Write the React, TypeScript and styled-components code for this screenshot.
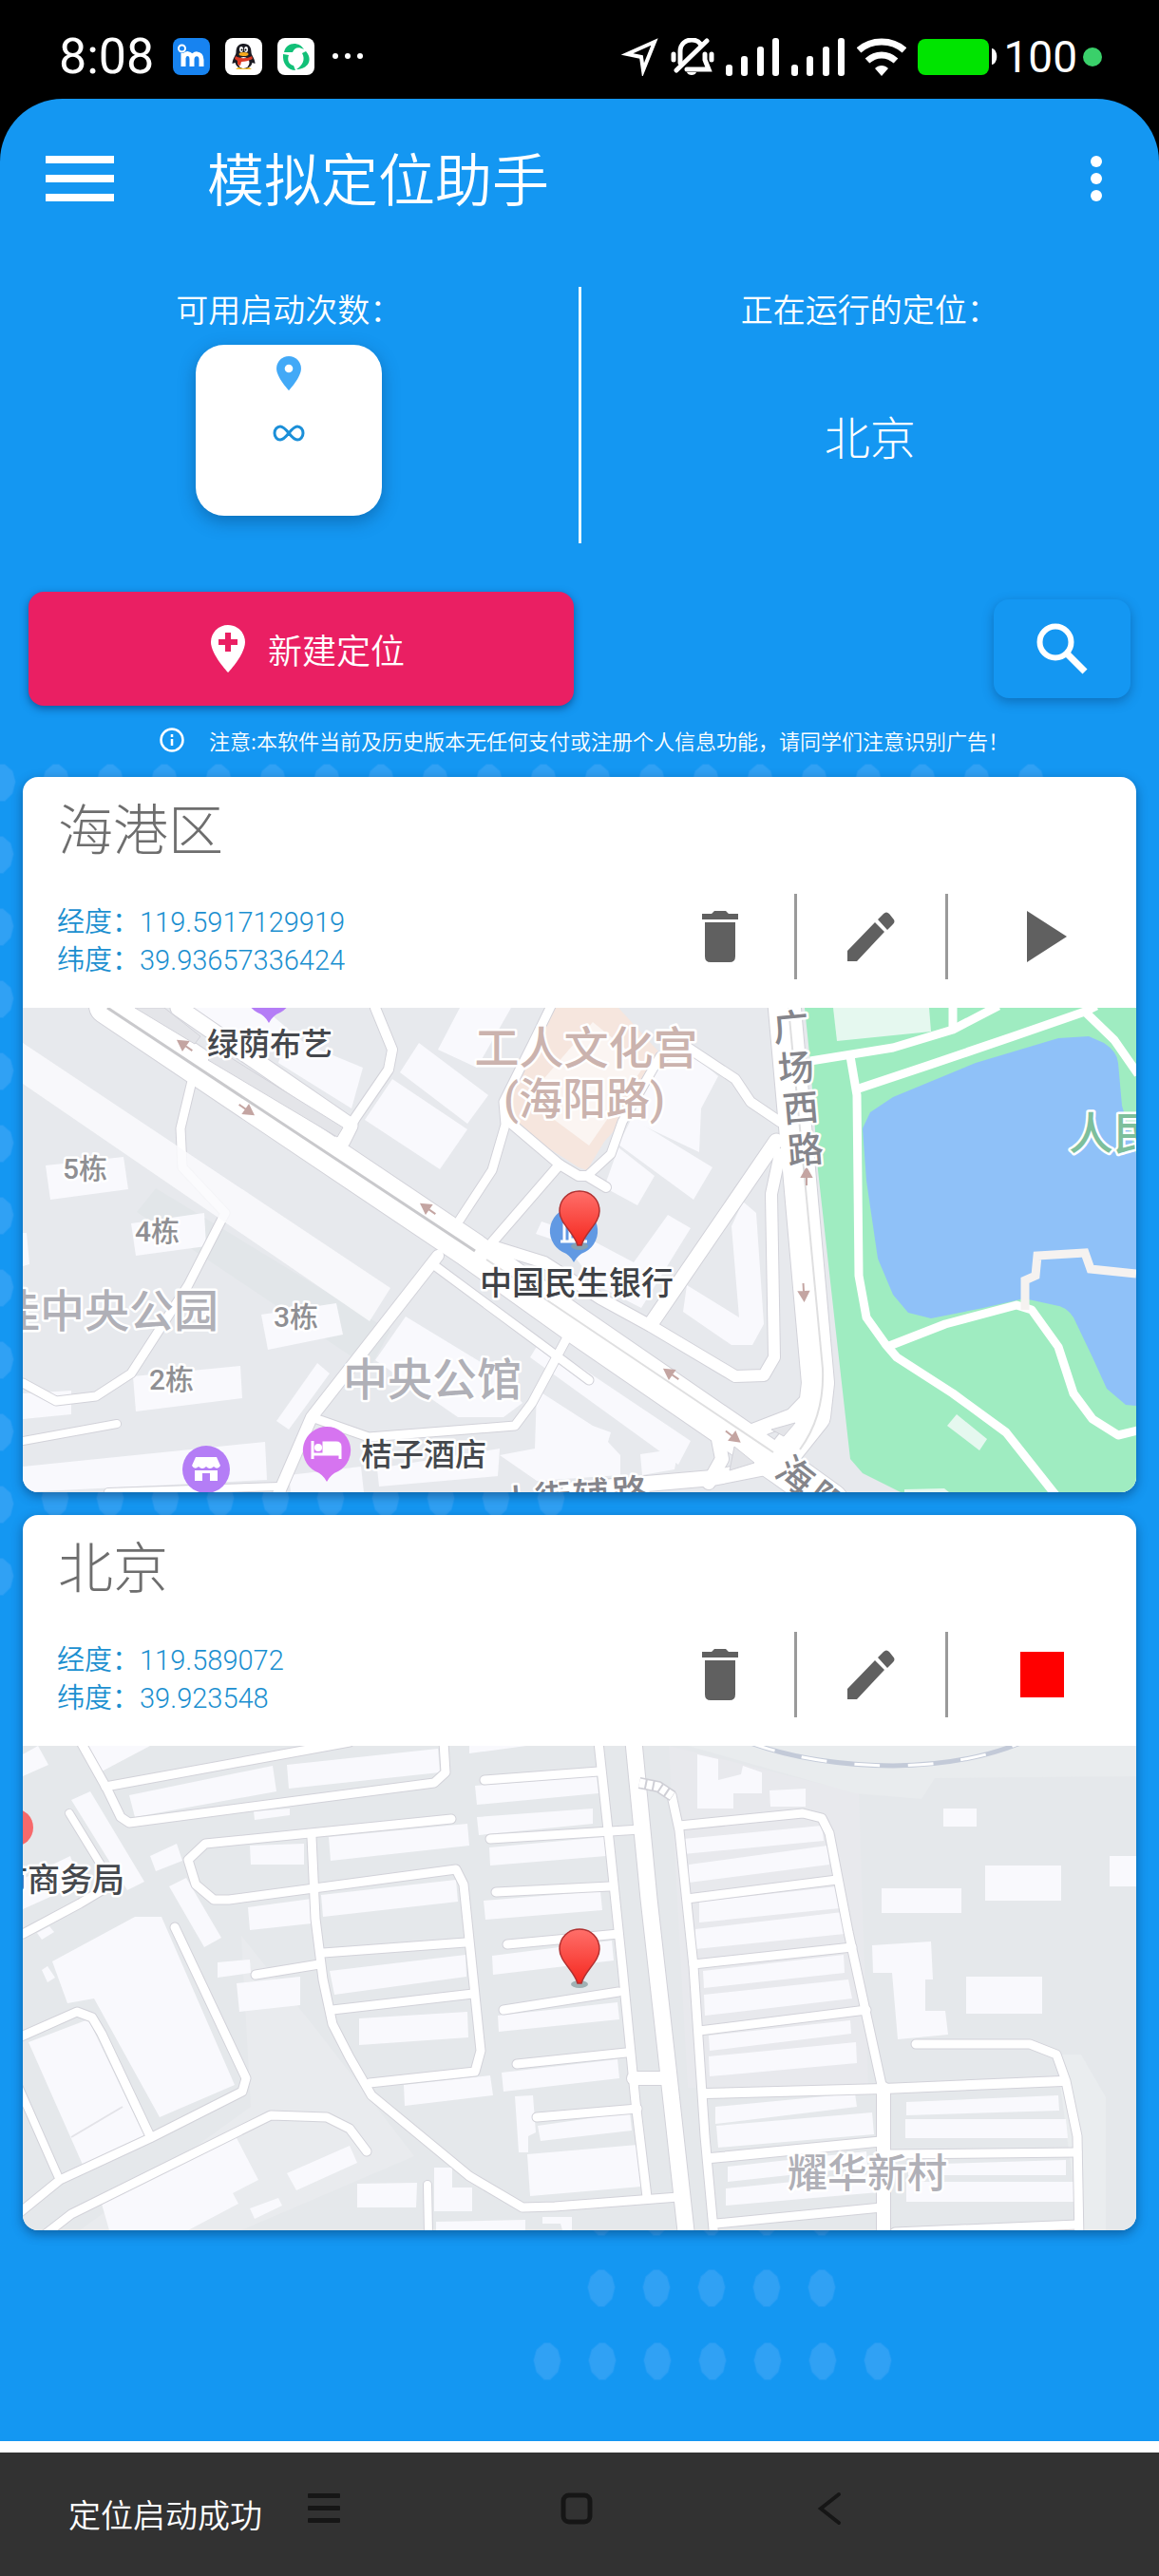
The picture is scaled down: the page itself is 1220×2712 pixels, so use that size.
import React from "react";
import styled, { createGlobalStyle } from "styled-components";

const cjk = `"Noto Sans CJK SC", "Noto Sans", sans-serif`;
const latin = `Roboto, "Noto Sans CJK SC", sans-serif`;
const blue = "#1497f2";

const GlobalStyle = createGlobalStyle`
  * { box-sizing: border-box; }
  body { margin: 0; background: #000; font-family: ${cjk}; }
  button { border: 0; padding: 0; background: none; color: inherit; font: inherit; cursor: pointer; }
  h1, h2, p, dl, dd, dt { margin: 0; font-weight: inherit; }
  svg { display: block; flex: none; }
`;

const Screen = styled.div`
  min-height: 100vh;
  display: flex;
  flex-direction: column;
  background: #000;
  overflow: hidden;
`;

/* ---------- status bar ---------- */
const StatusBar = styled.header`
  height: 104px;
  padding: 16px 60px 0 62px;
  display: flex;
  align-items: center;
  justify-content: space-between;
  color: #fff;
`;
const StatusGroup = styled.div<{ $gap: number }>`
  display: flex;
  align-items: center;
  gap: ${(p) => p.$gap}px;
`;
const Clock = styled.time`
  font: 400 52px/60px ${latin};
`;
const BatteryLevel = styled.span`
  font: 400 46px/60px ${latin};
`;
const LiveDot = styled.span`
  width: 20px;
  height: 20px;
  border-radius: 50%;
  background: #3ad06a;
`;

/* ---------- app panel ---------- */
const Panel = styled.main`
  position: relative;
  flex: 1;
  background: ${blue};
  border-radius: 66px 66px 0 0;
  overflow: hidden;
  color: #fff;
`;
const Backdrop = styled.svg`
  position: absolute;
  left: 0;
  top: 0;
`;
const Content = styled.div`
  position: relative;
  display: flex;
  flex-direction: column;
`;
const Toolbar = styled.div`
  height: 168px;
  padding: 0 48px;
  display: flex;
  align-items: center;
`;
const Title = styled.h1`
  flex: 1;
  margin-left: 98px;
  padding-bottom: 4px;
  font-size: 60px;
  font-weight: 350;
  line-height: 72px;
`;
const MenuButton = styled.button`
  width: 72px;
  height: 48px;
`;
const MoreButton = styled.button`
  width: 36px;
  height: 48px;
  display: flex;
  justify-content: center;
`;

const Stats = styled.section`
  margin-top: 30px;
  height: 270px;
  display: grid;
  grid-template-columns: 1fr 3px 1fr;
`;
const StatsDivider = styled.div`
  background: #e8f8ff;
`;
const Stat = styled.div`
  padding-top: 3px;
  display: flex;
  flex-direction: column;
  align-items: center;
  gap: 18px;
`;
const StatLabel = styled.p`
  font-size: 34px;
  font-weight: 350;
  line-height: 40px;
`;
const CountCard = styled.div`
  width: 196px;
  height: 180px;
  padding-top: 12px;
  border-radius: 30px;
  background: #fff;
  color: #1b8fd8;
  box-shadow: 0 6px 18px rgba(0, 40, 80, 0.35);
  display: flex;
  flex-direction: column;
  align-items: center;
  gap: 36px;
`;
const Running = styled.p`
  padding-top: 59px;
  font-size: 48px;
  font-weight: 300;
  line-height: 72px;
`;

const Actions = styled.section`
  margin-top: 51px;
  padding: 0 30px;
  display: flex;
  align-items: center;
  justify-content: space-between;
`;
const CreateButton = styled.button`
  flex: 0 0 calc(50% - 6px);
  height: 120px;
  padding-left: 14px;
  border-radius: 16px;
  background: #ea1f63;
  box-shadow: 0 3px 8px rgba(0, 30, 80, 0.5);
  display: flex;
  align-items: center;
  justify-content: center;
  gap: 24px;
  color: #fff;
  font-size: 36px;
  font-weight: 350;
`;
const SearchButton = styled.button`
  width: 144px;
  height: 104px;
  border-radius: 16px;
  background: ${blue};
  box-shadow: 0 4px 12px rgba(0, 40, 90, 0.35);
  display: flex;
  align-items: center;
  justify-content: center;
`;
const Notice = styled.p`
  height: 75px;
  padding: 0 0 4px 10px;
  display: flex;
  align-items: center;
  justify-content: center;
  gap: 26px;
  font-size: 22px;
  font-weight: 350;
`;

/* ---------- location cards ---------- */
const CardList = styled.section`
  padding: 0 24px;
  display: flex;
  flex-direction: column;
  gap: 24px;
`;
const Card = styled.article`
  border-radius: 16px;
  background: #fff;
  overflow: hidden;
  box-shadow: 0 4px 12px rgba(0, 30, 70, 0.45);
`;
const CardTitle = styled.h2`
  padding: 16px 37px 4px;
  color: #6e6e6e;
  font-size: 58px;
  font-weight: 300;
  line-height: 72px;
`;
const CardRow = styled.div`
  margin: 31px 0 30px;
  height: 90px;
  padding-left: 36px;
  display: flex;
  align-items: stretch;
`;
const Coordinates = styled.dl`
  flex: 1;
  align-self: center;
  padding-top: 10px;
  color: #1b8fd0;
  font: 350 29px/40px ${latin};
`;
const Coordinate = styled.div`
  display: flex;
`;
const CardAction = styled.button<{ $wide?: boolean }>`
  width: ${(p) => (p.$wide ? 198 : 156)}px;
  display: flex;
  align-items: center;
  justify-content: center;
`;
const ActionDivider = styled.div`
  width: 3px;
  background: #9a9a9a;
`;
const Map = styled.svg`
  width: 100%;
  height: 510px;
  font-family: ${latin};
`;

/* ---------- bottom ---------- */
const Strip = styled.div`
  height: 12px;
  background: #fff;
`;
const BottomBar = styled.footer`
  position: relative;
  height: 130px;
  background: #323232;
`;
const NavKeys = styled.nav`
  height: 118px;
  padding-right: 6px;
  display: flex;
  justify-content: center;
`;
const NavKey = styled.button`
  width: 266px;
  display: flex;
  align-items: center;
  justify-content: center;
`;
const Toast = styled.p`
  position: absolute;
  left: 72px;
  top: 41px;
  color: #fff;
  font-size: 34px;
  font-weight: 350;
  line-height: 48px;
`;

/* ---------- small icons ---------- */
const Signal = () => (
  <svg width="57" height="40" fill="#fff">
    <rect x="0" y="28" width="7" height="12" rx="3" />
    <rect x="16" y="19" width="7" height="21" rx="3" />
    <rect x="33" y="9" width="7" height="31" rx="3" />
    <rect x="49" y="0" width="7" height="40" rx="3" />
  </svg>
);

const NotificationIcons = () => (
  <svg width="202" height="40" viewBox="0 0 202 40">
    <rect width="39" height="39" rx="8" fill="#1783f0" />
    <circle cx="9.500" cy="11" r="3.500" fill="none" stroke="#fff" strokeWidth="2" />
    <path d="M11 30V16M11 21c1-6 9-6 9 1v8M20 22c1-7 10-7 10 1v7" fill="none" stroke="#fff" strokeWidth="5" />
    <rect x="55" width="39" height="39" rx="8" fill="#fff" />
    <path d="M66 33l4-3h9l4 3z" fill="#f6c02c" />
    <path d="M74.500 6c-6 0-8 4-8 9 0 3-4 7-4 12l3-1c1 4 4 6 9 6s8-2 9-6l3 1c0-5-4-9-4-12 0-5-2-9-8-9z" fill="#1b1b22" />
    <ellipse cx="74.500" cy="26" rx="6" ry="6" fill="#fff" />
    <ellipse cx="72" cy="12" rx="2" ry="3" fill="#fff" />
    <ellipse cx="77" cy="12" rx="2" ry="3" fill="#fff" />
    <circle cx="72.500" cy="12.500" r="1" /><circle cx="76.500" cy="12.500" r="1" />
    <ellipse cx="74.500" cy="17" rx="5" ry="2" fill="#f6a91c" />
    <path d="M66 19c5 3 12 3 17 0l1 3c-4 2-8 3-12 3l-1 4-3-1v-4l-3-2z" fill="#dd3a24" />
    <rect x="110" width="39" height="39" rx="8" fill="#fff" />
    <g fill="#12c078">
      <path d="M117 15c2-11 16-12 21-3-6-3-10-2-12 3z" />
      <path d="M140 14c8 9 2 19-10 19 6-4 10-10 6-17z" />
      <path d="M116 17c-1 10 5 17 13 17l-2-5c-5-1-7-6-5-11z" />
    </g>
    <g fill="#fff"><circle cx="171" cy="19" r="3" /><circle cx="184" cy="19" r="3" /><circle cx="197" cy="19" r="3" /></g>
  </svg>
);

const LocationArrow = () => (
  <svg width="40" height="40" viewBox="0 0 40 40">
    <path d="M35 4L6 17l15 3 2 14z" fill="none" stroke="#fff" strokeWidth="4" strokeLinejoin="miter" />
  </svg>
);
const MutedBell = () => (
  <svg width="46" height="40" viewBox="0 0 46 40" fill="none" stroke="#fff" strokeLinecap="round">
    <path d="M10 26V14C10 6 16 2 22 2c4 0 7 1 9 4M36 17v6l4 10H17" strokeWidth="5" />
    <path d="M3 17v6M43 17v6" strokeWidth="5" />
    <path d="M6 34L38 3" strokeWidth="5" />
    <path d="M17 36h10c-1 4-9 4-10 0z" fill="#fff" stroke="none" />
  </svg>
);
const Wifi = () => (
  <svg width="52" height="40" viewBox="0 0 52 40">
    <g fill="none" stroke="#fff" strokeWidth="7">
      <path d="M2 13c13-12 35-12 48 0" /><path d="M11 24c9-8 21-8 30 0" />
    </g>
    <path d="M19 32c4-4 10-4 14 0l-7 8z" fill="#fff" />
  </svg>
);
const Battery = () => (
  <svg width="84" height="40">
    <rect y="1" width="75" height="38" rx="8" fill="#00e400" />
    <path d="M78 11c7 1 7 16 0 17z" fill="#fff" />
  </svg>
);

const PinGlyph = ({ size, color, children }: { size: [number, number]; color: string; children?: React.ReactNode }) => (
  <svg width={size[0]} height={size[1]} viewBox="0 0 36 50">
    <path d="M18 0C8 0 0 8 0 18c0 13 18 32 18 32s18-19 18-32C36 8 28 0 18 0z" fill={color} />
    {children}
  </svg>
);

const Trash = () => (
  <svg width="38" height="54" viewBox="0 0 38 54" fill="#606060">
    <path d="M0 3h10l3-3h12l3 3h10v6H0zM3 12h32v36q0 6-6 6H9q-6 0-6-6z" />
  </svg>
);
const Pencil = () => (
  <svg width="50" height="52" viewBox="0 0 50 52" fill="#606060">
    <path d="M0 41L29 11l10 10L10 52H0zM32 8l6-6q3-3 6 0l4 5q3 3 0 6l-6 6z" />
  </svg>
);
const Play = () => (
  <svg width="52" height="54" viewBox="0 0 52 54"><path d="M10 0l42 27-42 27z" fill="#606060" /></svg>
);
const Stop = () => (
  <svg width="46" height="48"><rect width="46" height="48" fill="#f00" /></svg>
);

/* ---------- background dots ---------- */
const dotPitch = 57;
const dots: [number, number][] = [];
for (let i = 0; i < 20; i++) dots.push([i * dotPitch + 2, 720]);
for (let i = 1; i < 12; i++) dots.push([0, 720 + i * 76]);
for (let i = 1; i < 11; i++) dots.push([i * 58, 1474]);
for (let i = 0; i < 5; i++) dots.push([633 + i * 58, 2230], [633 + i * 58, 2305]);
for (let i = 0; i < 7; i++) dots.push([576 + i * 58, 2382]);

const Dots = () => (
  <Backdrop width="1220" height="2466" fill="#30a1f4" aria-hidden="true">
    {dots.map(([x, y], i) => (
      <path key={i} d={`M${x - 3} ${y - 19}h6l8 7 3 11-3 12-8 8h-6l-8-8-3-12 3-11z`} stroke="#30a1f4" strokeOpacity=".4" strokeWidth="2" strokeLinejoin="round" />
    ))}
  </Backdrop>
);

/* ---------- maps ---------- */
type Road = [width: number, points: string];

const Roads = ({ items }: { items: Road[] }) => (
  <g fill="none" strokeLinejoin="round" strokeLinecap="round">
    {items.map(([w, p], i) => <polyline key={`c${i}`} points={p} stroke="#d2d2d9" strokeWidth={w + 2} />)}
    {items.map(([w, p], i) => <polyline key={`r${i}`} points={p} stroke="#fff" strokeWidth={w} />)}
  </g>
);

const Blocks = ({ items, fill = "#f9f9fd" }: { items: string[]; fill?: string }) => (
  <g fill={fill}>{items.map((p, i) => <polygon key={i} points={p} />)}</g>
);

type LabelProps = {
  x: number; y: number; size: number; color: string; children: string;
  anchor?: "start" | "middle" | "end"; turn?: number; weight?: number;
};
const Label = ({ x, y, size, color, children, anchor = "middle", turn = 0, weight = 500 }: LabelProps) => (
  <text x={x} y={y} fontSize={size} fill={color} textAnchor={anchor} fontWeight={weight}
    stroke="#fff" strokeWidth="5" strokeLinejoin="round" paintOrder="stroke"
    transform={turn ? `rotate(${turn} ${x} ${y})` : undefined}>{children}</text>
);

const MarkerPin = ({ id }: { id: string }) => (
  <g>
    <defs>
      <linearGradient id={id} x1="0" y1="0" x2="0" y2="1">
        <stop offset="0" stopColor="#ff6f6a" /><stop offset="1" stopColor="#f5281f" />
      </linearGradient>
    </defs>
    <ellipse cx="586" cy="251" rx="9" ry="4" fill="#8fa3a6" opacity=".8" />
    <path d="M586 193c-12 0-21 9-21 21 0 13 15 22 19 36h4c4-14 19-23 19-36 0-12-9-21-21-21z"
      fill={`url(#${id})`} stroke="#b03030" strokeWidth="1.500" />
  </g>
);

const Poi = ({ x, y, color, children }: { x: number; y: number; color: string; children?: React.ReactNode }) => (
  <g transform={`translate(${x} ${y})`}>
    <path d="M0-25a25 25 0 0 1 12 47Q4 25 0 33-4 25-12 22A25 25 0 0 1 0-25z" fill={color} />
    {children}
  </g>
);

const Arrow = ({ x, y, turn }: { x: number; y: number; turn: number }) => (
  <path d="M-9 0H4M0-5l9 5-9 5z" fill="#c4a5a2" stroke="#c4a5a2" strokeWidth="2" transform={`translate(${x} ${y}) rotate(${turn})`} />
);

const harborBlocks = [
  "417,37 490,92 468,122 397,68", "389,75 468,128 439,170 360,118", "460,0 514,0 478,63 437,44",
  "278,30 358,63 346,106 269,58", "166,0 253,0 300,40 240,50",
  "24,166 106,157 111,191 29,202", "114,227 191,216 193,251 119,261", "251,323 330,311 337,344 258,360",
  "116,388 229,377 231,411 119,425", "310,374 323,385 280,444 267,435", "0,406 51,403 51,428 0,433",
  "0,483 255,457 257,497 0,510", "403,325 490,378 526,416 506,431 458,431 371,371",
  "280,492 356,483 359,510 282,510", "373,485 502,464 500,493 375,504",
  "541,402 600,440 619,447 616,457 629,471 629,492 541,498 502,471 539,464",
  "545,350 703,456 690,481 534,368", "671,60 700,45 732,72 714,106 712,152 640,118",
  "641,116 726,168 706,202 627,144", "627,147 665,177 647,208 612,189",
  "679,218 703,232 651,316 604,292 570,248 540,238 546,225 590,240 643,268",
  "758,204 772,216 780,333 768,355 746,355 695,320 699,292 754,326 746,230",
  "650,470 690,464 686,486 652,492", "0,237 4,237 7,270 0,272",
];
const harborRoads: Road[] = [
  [9, "178,77 166,127 168,168 213,216 174,292 114,385 77,409 35,414 0,395"],
  [8, "0,456 99,438"],
  [8, "90,510 270,504"],
  [12, "437,261 304,431 269,512"],
  [9, "304,431 364,452 518,440 536,416 573,347"],
  [9, "433,271 541,351 596,392"],
  [10, "371,0 389,44 385,65 350,116 334,144"],
  [17, "164,0 344,124 336,140"],
  [9, "460,223 494,171 508,123 506,99 537,37 557,-4"],
  [10, "494,247 565,165 512,120"],
  [10, "565,165 585,177 594,177 614,189"],
  [9, "594,177 619,154 631,120 671,51"],
  [10, "700,42 750,75 766,99 797,120"],
  [15, "661,333 793,140"],
  [12, "494,251 549,268 608,306 661,335 750,388 780,387 791,368 788,196 797,154"],
  [38, "89,-2 470,254 582,334 800,484 850,520"],
  [34, "801,-10 837,395 833,430 797,475"],
  [16, "837,402 810,430 766,447"],
  [16, "576,508 726,495 797,481"],
  [14, "730,444 736,475 722,500"],
];
const parkPaths = [
  "829,56 916,42 979,23 1027,-2", "979,0 979,20", "880,85 952,61 1043,30 1118,4 1130,-2",
  "1118,4 1149,34 1174,70", "871,51 878,92 880,282 888,326 908,354 920,368 979,406 1035,447 1088,514",
  "912,356 971,333 1046,313 1062,318 1090,357 1106,406 1126,433 1153,450 1174,445",
];

const HarborMap = () => (
  <Map viewBox="0 0 1172 510" preserveAspectRatio="xMidYMid slice" role="img" aria-label="海港区">
    <rect width="1172" height="510" fill="#e7e9ed" />
    <polygon points="140,190 387,340 365,380 120,215" fill="#e2e6e9" />
    <polygon points="557,0 627,0 671,48 631,120 612,141 594,171 585,168 510,120 506,96 537,41" fill="#f6e6de" />
    <polygon points="600,15 655,60 596,145 530,96" fill="#fbf5f2" />
    <Blocks items={harborBlocks} />
    <polygon points="823,0 1172,0 1172,510 924,510 884,490 871,475 855,333 837,171 829,58" fill="#9fecc1" />
    <Blocks items={["853,0 857,35 956,25 954,0", "983,428 1015,454 1007,466 973,440", "928,507 970,506 975,510 928,510"]} fill="#e5f8ef" />
    <path d="M1090 32L1122 30 1138 37Q1152 46 1153 58L1157 103 1172 154V419L1161 418 1141 401 1126 368 1106 326Q1098 314 1086 313L1054 306 1011 316 956 327 932 321 916 302 900 264 888 182 884 127 892 110 916 94 1003 58z" fill="#8fc1f8" />
    <g fill="none" stroke="#fff" strokeWidth="9" strokeLinejoin="round">
      {parkPaths.map((p, i) => <polyline key={i} points={p} />)}
    </g>
    <polyline points="1055,318 1055,287 1066,282 1068,261 1118,258 1124,275 1172,280" fill="none" stroke="#f5f2f0" strokeWidth="9" />
    <Roads items={harborRoads} />
    <polygon points="0,37 387,295 365,330 0,80" fill="#fafafd" opacity=".85" />
    <g fill="none" stroke="#c9c9cc" strokeWidth="3">
      <path d="M89 0L476 256" />
      <path d="M488 265L790 468M806 0L842 380Q844 430 818 465" strokeWidth="2" opacity=".6" />
    </g>
    <g fill="#e4e5e9" stroke="#d2d2d9">
      <polygon points="788,444 813,437 801,451" /><polygon points="749,462 770,479 744,487" />
      <polygon points="118,0 149,0 187,30 181,38" /><polygon points="205,44 337,126 331,136 195,55" />
    </g>
    <Arrow x={171} y={40} turn={215} /><Arrow x={235} y={107} turn={35} /><Arrow x={427} y={212} turn={215} />
    <Arrow x={683} y={386} turn={215} /><Arrow x={747} y={451} turn={38} />
    <Arrow x={825} y={178} turn={-90} /><Arrow x={822} y={299} turn={87} />

    <Poi x={259} y={-17} color="#b47df6" />
    <Label x={260} y={50} size={33} color="#45484d">绿荫布艺</Label>
    <Label x={593} y={59} size={47} color="#cbb3ae">工人文化宫</Label>
    <Label x={591} y={112} size={46} color="#cbb3ae">(海阳路)</Label>
    <Label x={42} y={180} size={30} color="#8f8f93" anchor="start">5栋</Label>
    <Label x={118} y={246} size={30} color="#8f8f93" anchor="start">4栋</Label>
    <Label x={264} y={336} size={30} color="#8f8f93" anchor="start">3栋</Label>
    <Label x={133} y={402} size={30} color="#8f8f93" anchor="start">2栋</Label>
    <Label x={206} y={336} size={47} color="#b0b0b7" anchor="end">佳中央公园</Label>
    <Label x={431} y={408} size={47} color="#b0b0b7">中央公馆</Label>
    <Label x={810} y={34} size={38} color="#85858b" turn={-5}>广</Label>
    <Label x={815} y={77} size={38} color="#85858b" turn={-5}>场</Label>
    <Label x={820} y={119} size={38} color="#85858b" turn={-5}>西</Label>
    <Label x={825} y={163} size={38} color="#85858b" turn={-5}>路</Label>
    <Label x={522} y={534} size={38} color="#85858b" turn={-4}>上</Label>
    <Label x={559} y={530} size={38} color="#85858b" turn={-4}>街</Label>
    <Label x={599} y={527} size={38} color="#85858b" turn={-4}>辅</Label>
    <Label x={640} y={524} size={38} color="#85858b" turn={-4}>路</Label>
    <Label x={805} y={503} size={38} color="#85858b" turn={38}>海</Label>
    <Label x={838} y={530} size={38} color="#85858b" turn={38}>阳</Label>
    <Label x={1101} y={149} size={47} color="#7dbf9c" anchor="start">人民</Label>

    <g transform="translate(193 486)">
      <circle r="25" fill="#b47df6" />
      <path d="M-11-13h22l4 9q-3 5-7 1-4 4-8 0-4 4-8 0-4 4-7-1zM-12 1h24v11H-12z" fill="#fff" />
      <rect x="-4" y="4" width="8" height="8" fill="#b47df6" />
    </g>
    <Poi x={320} y={466} color="#d674f0">
      <path d="M-15-10v19M-14 4h28v5M14 5v-9q0-4-4-4H-3V3" fill="none" stroke="#fff" strokeWidth="3" />
      <path d="M-3-8H11q3 1 3 5v7H-3z" fill="#fff" /><circle cx="-9" cy="-3" r="4" fill="#fff" />
    </Poi>
    <Label x={422} y={482} size={33} color="#45484d">桔子酒店</Label>
    <Poi x={580} y={235} color="#6199e3">
      <path d="M-14 11h28M-10 11V-8M10 11V-8M-4 9V-4h8V9z" fill="none" stroke="#fff" strokeWidth="3" />
    </Poi>
    <Label x={583} y={302} size={34} color="#3f4247">中国民生银行</Label>
    <MarkerPin id="harborPin" />
  </Map>
);

const beijingBlocks = [
  "0,9 16,0 27,20 0,32", "65,0 134,0 83,27", "112,52 263,21 267,48 118,75", "278,20 437,3 439,28 280,45",
  "51,57 71,48 128,143 110,152", "134,116 162,103 168,121 140,132", "154,148 172,139 209,202 191,212",
  "322,96 468,82 470,105 324,121", "239,105 296,103 296,125 240,125", "314,157 456,141 458,164 316,180",
  "237,170 304,161 304,187 239,194", "205,228 239,225 240,239 205,244", "225,250 292,243 292,273 228,280",
  "323,237 466,220 467,243 328,262", "354,287 468,280 469,307 354,315", "401,357 492,347 495,368 402,379",
  "31,227 118,180 146,180 223,357 144,391 75,266 47,271", "6,312 69,288 128,411 63,441",
  "83,482 223,409 248,457 221,471 227,482 174,510 91,510", "278,450 344,421 352,439 288,468",
  "239,487 269,476 273,484 244,498", "352,461 415,460 414,486 352,486",
  "433,444 452,444 452,465 473,465 473,490 433,490", "435,501 529,499 529,510 435,510",
  "0,140 50,116 60,145 0,172", "243,69 281,66 281,73 244,78", "15,197 28,190 33,196 20,204", "547,496 578,496 578,510 568,510 566,503 547,503",
  "470,0 530,0 470,8", "20,236 26,232 34,244 26,249",
  "476,42 604,32 606,50 478,62", "478,75 600,66 600,82 480,94", "491,107 612,96 614,116 492,126",
  "485,163 608,153 610,173 487,183", "494,221 620,205 622,226 495,241", "500,284 626,270 628,288 501,301",
  "504,344 626,330 628,350 506,364", "542,400 639,386 641,405 545,416",
  "518,369 537,368 540,407 532,411 532,428 522,428", "531,430 647,420 651,464 534,474",
  "695,98 841,84 843,100 695,114", "701,125 847,105 849,125 701,144", "712,164 858,148 860,171 712,186",
  "708,193 863,175 865,198 708,214", "716,237 864,220 865,239 717,255", "717,262 869,246 873,266 718,284",
  "722,305 871,289 872,303 723,321", "722,327 877,312 878,334 723,348", "729,380 876,366 878,380 729,398",
  "730,400 894,386 896,409 732,423", "742,443 888,427 889,443 742,459", "740,466 901,450 901,470 740,484",
  "930,375 1090,368 1091,384 930,389", "929,393 1098,393 1100,413 929,413", "932,441 1098,436 1098,452 932,452",
  "930,459 1107,459 1107,480 930,480",
  "710,9 732,14 732,36 756,30 758,21 778,28 778,50 748,50 748,66 710,66", "786,47 824,45 824,64 787,64",
  "969,66 1004,66 1004,85 969,85", "904,150 988,150 988,176 904,176", "1013,126 1093,126 1093,163 1013,163",
  "1144,116 1172,116 1172,148 1144,148", "993,243 1073,243 1073,282 993,282",
  "894,210 956,206 958,246 950,246 950,279 971,279 974,304 921,309 915,239 895,239",
];
const beijingRoads: Road[] = [
  [9, "61,-4 89,46 103,75 112,81 433,39 445,28 443,-4"],
  [9, "87,43 344,-4"],
  [8, "49,71 85,130"],
  [9, "90,148 60,166 0,198"],
  [9, "451,77 192,103 174,120 182,146 201,162 217,162 456,130 464,146 482,321 476,343 365,355"],
  [9, "304,96 308,182 316,246 326,293 344,328 367,368 470,453 526,486 560,485 690,475"],
  [9, "316,218 466,207"], [9, "326,278 474,261"], [9, "245,241 312,230"],
  [9, "160,191 235,350 231,364 134,413 39,457 -4,492"],
  [9, "-4,307 57,280 73,286 83,303 134,411"], [8, "-4,360 37,453"],
  [9, "24,514 51,493 261,389 320,391 344,403 362,427"], [8, "426,462 427,514"],
  [9, "486,36 606,27"], [9, "492,98 650,88"], [9, "498,154 618,148"], [9, "510,209 627,198"],
  [9, "506,278 627,259"], [9, "520,335 635,323"], [9, "541,391 647,382"],
  [9, "606,-4 618,107 631,232 645,375 657,475"],
  [14, "643,350 681,350"],
  [17, "643,-4 659,161 679,339 699,520"],
  [9, "683,52 691,89 706,232 718,411 728,520"],
  [9, "691,84 821,71 841,76 849,92 869,196 904,357"],
  [14, "906,361 906,520"],
  [9, "699,161 857,141"], [9, "706,230 873,212"], [9, "712,300 888,278"],
  [10, "718,366 906,361 1094,353"], [10, "724,434 908,416"], [9, "730,503 904,486"],
  [9, "912,430 1110,428"], [9, "918,512 1110,504"],
  [9, "940,314 1060,314 1088,325 1098,353 1110,411 1112,520"],
];

const BeijingMap = () => (
  <Map viewBox="0 0 1172 510" preserveAspectRatio="xMidYMid slice" role="img" aria-label="北京">
    <rect width="1172" height="510" fill="#e5e8eb" />
    <polygon points="680,0 880,50 890,360 700,360" fill="#e8e9ed" />
    <polygon points="876,50 946,56 960,34 1172,32 1172,0 700,0" fill="#e9ecee" />
    <polygon points="230,200 310,300 412,432 230,510 60,510 240,380" fill="#e9ebee" />
    <polygon points="1088,325 1114,325 1140,370 1140,510 1112,510" fill="#eaedef" />
    <Blocks items={beijingBlocks} />
    <Roads items={beijingRoads} />
    <g fill="none">
      <path d="M649 39l20 4 15 10" stroke="#cfcfd6" strokeWidth="12" />
      <path d="M649 39l20 4 15 10" stroke="#fff" strokeWidth="9" strokeDasharray="6 2" />
      <path d="M766-3Q829 20 916 21 995 20 1050-3" stroke="#c3cad8" strokeWidth="5" />
      <path d="M766-3Q829 20 916 21 995 20 1050-3" stroke="#fff" strokeWidth="3" strokeDasharray="27 29" />
      <path d="M51 412l54-32" stroke="#e3e3e8" strokeWidth="2" />
    </g>
    <circle cx="-9" cy="86" r="20" fill="#f7696b" />
    <Label x={107} y={153} size={34} color="#45484d" anchor="end">市商务局</Label>
    <Label x={889} y={465} size={42} color="#b0b0b7">耀华新村</Label>
    <MarkerPin id="beijingPin" />
  </Map>
);

type Place = { name: string; lng: string; lat: string; running: boolean; map: React.ReactNode };
const places: Place[] = [
  { name: "海港区", lng: "119.5917129919", lat: "39.93657336424", running: false, map: <HarborMap /> },
  { name: "北京", lng: "119.589072", lat: "39.923548", running: true, map: <BeijingMap /> },
];

const PlaceCard = ({ place }: { place: Place }) => (
  <Card>
    <CardTitle>{place.name}</CardTitle>
    <CardRow>
      <Coordinates>
        <Coordinate><dt>经度：</dt><dd>{place.lng}</dd></Coordinate>
        <Coordinate><dt>纬度：</dt><dd>{place.lat}</dd></Coordinate>
      </Coordinates>
      <CardAction aria-label="删除"><Trash /></CardAction>
      <ActionDivider />
      <CardAction aria-label="编辑"><Pencil /></CardAction>
      <ActionDivider />
      <CardAction $wide aria-label={place.running ? "停止" : "启动"}>{place.running ? <Stop /> : <Play />}</CardAction>
    </CardRow>
    {place.map}
  </Card>
);

export default function App() {
  return (
    <Screen>
      <GlobalStyle />
      <StatusBar>
        <StatusGroup $gap={20}>
          <Clock>8:08</Clock>
          <NotificationIcons />
        </StatusGroup>
        <StatusGroup $gap={12}>
          <LocationArrow />
          <MutedBell />
          <Signal />
          <Signal />
          <Wifi />
          <StatusGroup $gap={6}>
            <Battery />
            <BatteryLevel>100</BatteryLevel>
            <LiveDot />
          </StatusGroup>
        </StatusGroup>
      </StatusBar>

      <Panel>
        <Dots />
        <Content>
          <Toolbar>
            <MenuButton aria-label="菜单">
              <svg width="72" height="48" fill="#fff"><path d="M0 0h72v8H0zM0 20h72v8H0zM0 40h72v8H0z" /></svg>
            </MenuButton>
            <Title>模拟定位助手</Title>
            <MoreButton aria-label="更多">
              <svg width="12" height="48" fill="#fff"><circle cx="6" cy="6" r="6" /><circle cx="6" cy="24" r="6" /><circle cx="6" cy="42" r="6" /></svg>
            </MoreButton>
          </Toolbar>

          <Stats>
            <Stat>
              <StatLabel>可用启动次数：</StatLabel>
              <CountCard>
                <PinGlyph size={[26, 36]} color="#42a9f7"><circle cx="18" cy="18" r="6" fill="#fff" /></PinGlyph>
                <svg width="34" height="18" viewBox="0 0 34 18" fill="none" stroke="currentColor" strokeWidth="3" role="img" aria-label="∞">
                  <path d="M17 9C13 4 11 2 8 2a6 7 0 0 0 0 14c3 0 5-2 9-7s6-7 9-7a6 7 0 0 1 0 14c-3 0-5-2-9-7z" />
                </svg>
              </CountCard>
            </Stat>
            <StatsDivider />
            <Stat>
              <StatLabel>正在运行的定位：</StatLabel>
              <Running>北京</Running>
            </Stat>
          </Stats>

          <Actions>
            <CreateButton>
              <PinGlyph size={[36, 50]} color="#fff">
                <path d="M15 8h6v7h7v6h-7v7h-6v-7H8v-6h7z" fill="#ea1f63" />
              </PinGlyph>
              新建定位
            </CreateButton>
            <SearchButton aria-label="搜索">
              <svg width="54" height="54" viewBox="0 0 54 54" fill="none" stroke="#fff">
                <circle cx="20" cy="20" r="16.500" strokeWidth="6" />
                <path d="M31 31l20 20" strokeWidth="7" />
              </svg>
            </SearchButton>
          </Actions>

          <Notice>
            <svg width="26" height="26" viewBox="0 0 26 26" fill="none" stroke="#fff" strokeWidth="2.500">
              <circle cx="13" cy="13" r="11.500" /><path d="M13 12v7M13 7v3" />
            </svg>
            <span>注意:本软件当前及历史版本无任何支付或注册个人信息功能，请同学们注意识别广告！</span>
          </Notice>

          <CardList>
            {places.map((p) => <PlaceCard key={p.name} place={p} />)}
          </CardList>
        </Content>
      </Panel>

      <Strip />
      <BottomBar>
        <NavKeys>
          <NavKey aria-label="最近任务">
            <svg width="34" height="32" fill="#161616"><rect width="34" height="5" rx="1" /><rect y="13" width="34" height="5" rx="1" /><rect y="26" width="34" height="5" rx="1" /></svg>
          </NavKey>
          <NavKey aria-label="主屏幕">
            <svg width="34" height="34" fill="none" stroke="#161616" strokeWidth="5"><rect x="3" y="3" width="28" height="28" rx="6" /></svg>
          </NavKey>
          <NavKey aria-label="返回">
            <svg width="26" height="36" fill="none" stroke="#161616" strokeWidth="4" strokeLinecap="round"><path d="M23 3L4 18l19 15" /></svg>
          </NavKey>
        </NavKeys>
        <Toast role="status">定位启动成功</Toast>
      </BottomBar>
    </Screen>
  );
}
